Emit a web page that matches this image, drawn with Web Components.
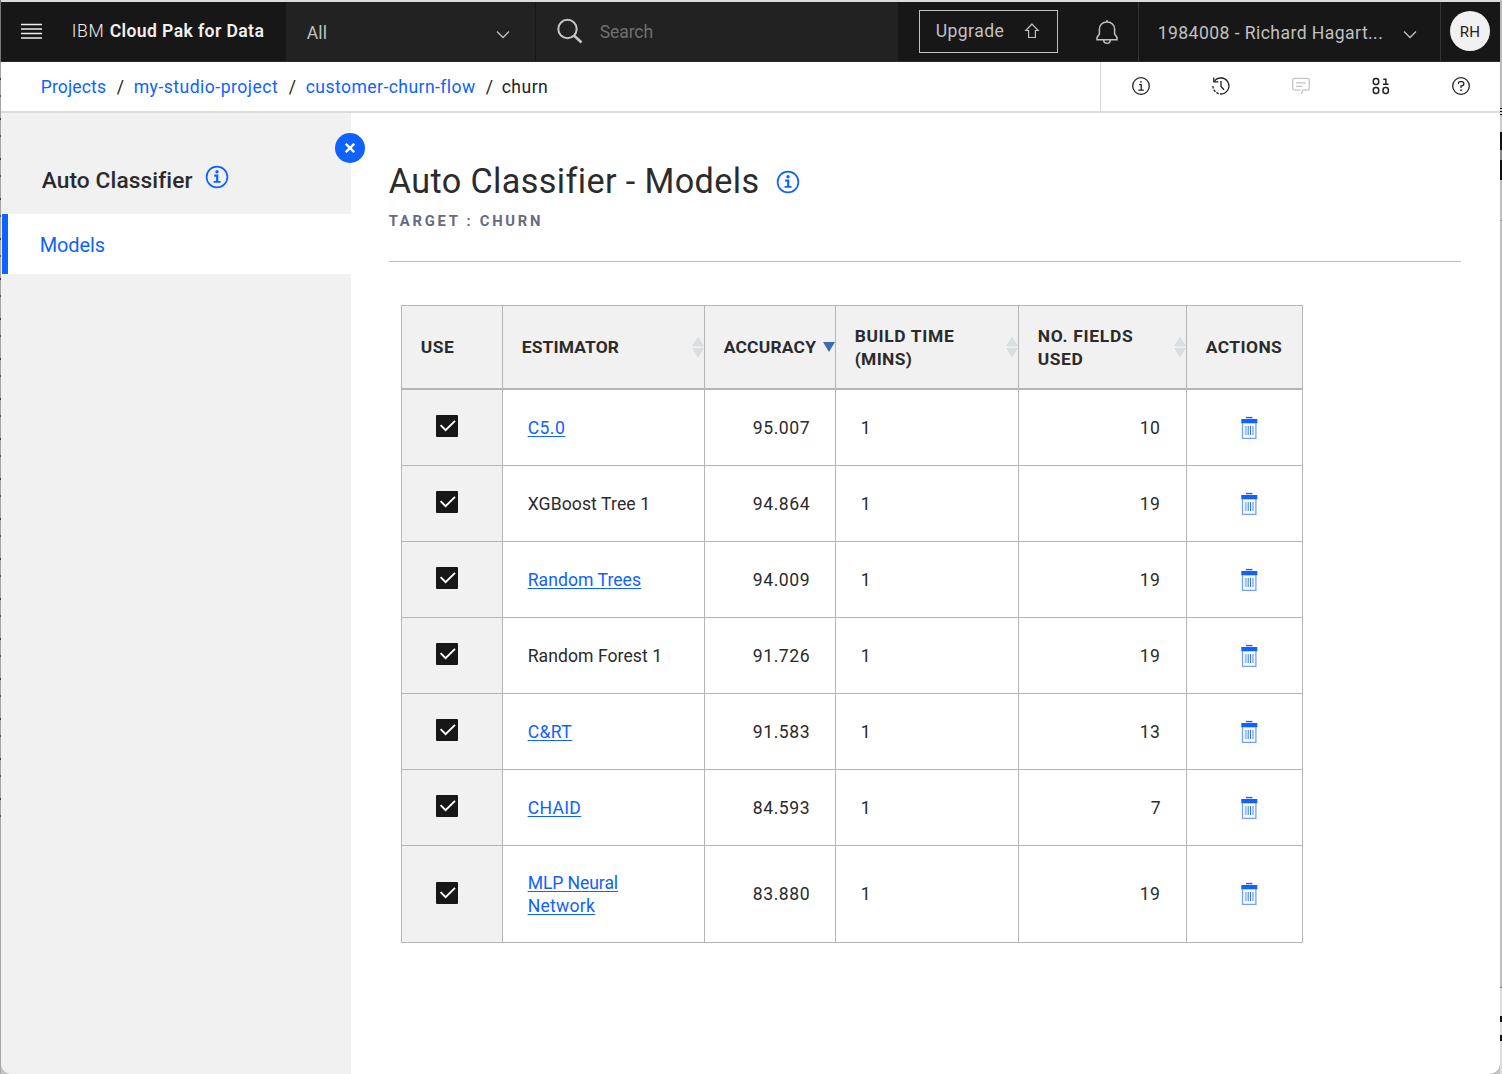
<!DOCTYPE html>
<html lang="en"><head><meta charset="utf-8"><title>churn - Auto Classifier</title>
<style>html,body{margin:0;height:100%;overflow:hidden;background:#c4c4c4}</style></head>
<body><app-window></app-window>
<script>
const base = '<style>*{box-sizing:border-box}svg{display:block;flex:none}:host{font-family:Roboto,sans-serif}</style>';
function component(name, html) {
  customElements.define(name, class extends HTMLElement {
    connectedCallback() {
      if (this.shadowRoot) return;
      this.attachShadow({mode: 'open'}).innerHTML = base + (typeof html === 'function' ? html(this) : html);
    }
  });
}
const t = (text, w, attrs = '') => `<fit-text w="${w}" ${attrs}>${text}</fit-text>`;

component('app-window', `<style>
:host{display:grid;grid-template-columns:1px 1499px 2px;height:1074px;width:1502px}
.left{background:linear-gradient(#777 0 62px,transparent 62px),repeating-linear-gradient(#aaa 0 15px,#555 15px 17px,#aaa 17px 38px,#333 38px 40px);background-size:1px 820px;background-repeat:no-repeat;background-color:#aaa}
.right{background:linear-gradient(#bbb 0 108px,#111 108px 109px,#ccc 109px 111px,#111 111px 112px,#ccc 112px 114px,#111 114px 115px,#ccc 115px 132px,#111 132px 150px,#888 150px 160px,#111 160px 180px,#c0c0c0 180px 220px,#999 220px 221px,#c0c0c0 221px 987px,#777 987px 988px,#ddd 988px 1016px,#111 1016px 1022px,#ddd 1022px 1035px,#111 1035px 1041px,#ddd 1041px)}
.app{background:#fff;border-top:2px solid #d9dcdc;border-radius:0 0 10px 10px;overflow:hidden;display:flex;flex-direction:column;box-shadow:0 0 1px #777}
.body{display:flex;flex:1;min-height:0}
</style><div class="left"></div><div class="app"><app-header></app-header><crumb-bar></crumb-bar><div class="body"><side-panel></side-panel><models-page></models-page></div></div><div class="right"></div>`);

component('app-header', `<style>
:host{display:flex;height:60px;background:#171717;color:#c1c1c1;border-bottom:1px solid #2c2828}
.brand{width:285px;display:flex;padding:17px 0 0 20px;color:#f0f0f0}
.brand svg{margin:3px 29px 0 0}.brand fit-text+fit-text{margin-left:4px}
.all{width:250px;background:#222;border-right:1px solid #171717;display:flex;justify-content:space-between;padding:19px 25px 0 20px}
.search{width:362px;background:#222;display:flex;padding:18px 0 0 20px;color:#6f6f6f}
.search svg{margin:-2px 15px 0 0}
.all svg,.acct svg{margin-top:9px}
.up{margin:8px 0 0 21px;width:139px;height:43px;border:1px solid #c1c1c1;display:flex;padding:8px 0 0 15px}
.up svg{margin:4px 0 0 19px}
.bell{width:80px;padding:17px 0 0 36px}
.acct{width:303px;border:solid #333;border-width:0 1px;display:flex;padding:19px 0 0 18px}
.acct svg{margin-left:19px}
.av{width:40px;height:40px;margin:9px 0 0 9px;border-radius:50%;background:#f1f1f1;color:#222;display:flex;justify-content:center;padding-top:9px}
</style>
<div class="brand"><svg width="21" height="18"><path d="M0 2.5h21M0 7h21M0 11.5h21M0 16h21" stroke="#eee" stroke-width="1.5"/></svg>${t('IBM',34,'size="17.6" weight="300"')}${t('Cloud Pak for Data',156,'size="17.6" weight="600"')}</div>
<div class="all">${t('All',22,'size="17.6"')}<svg width="14" height="10" viewBox="0 0 14 10" fill="none" stroke="#c1c1c1" stroke-width="1.3"><path d="M1 1.5l6 6 6-6"/></svg></div>
<div class="search"><svg width="28" height="28" viewBox="0 0 28 28" fill="none" stroke="#c6c6c6" stroke-width="2"><circle cx="11.5" cy="11" r="9.2"/><path d="M18 17.5l7.5 7" stroke-width="2.5"/></svg>${t('Search',55,'size="17.6"')}</div>
<div class="up">${t('Upgrade',70,'size="17.6"')}<svg width="16" height="16" viewBox="0 0 16 16" fill="none" stroke="#c1c1c1" stroke-width="1.2"><path d="M8 1L1.8 7.5h2.8v7h6.8v-7h2.8z"/></svg></div>
<div class="bell"><svg width="26" height="26" viewBox="0 0 26 26" fill="none" stroke="#c1c1c1" stroke-width="1.5"><path d="M13 1v2M13 3c-4.5 0-7.6 3-7.6 7.2V15L3 18.5v2.3h20v-2.3L20.6 15v-4.8C20.6 6 17.5 3 13 3z"/><path d="M9.7 21a3.3 3.3 0 0 0 6.6 0"/></svg></div>
<div class="acct">${t('1984008 - Richard Hagart...',227,'size="17.6"')}<svg width="14" height="10" viewBox="0 0 14 10" fill="none" stroke="#c1c1c1" stroke-width="1.3"><path d="M1 1.5l6 6 6-6"/></svg></div>
<div class="av">${t('RH',22,'size="15"')}</div>`);

component('crumb-bar', `<style>
:host{display:flex;height:51px;border-bottom:2px solid #d9dcdc;justify-content:space-between;background:#fff;color:#222}
nav{display:flex;padding:13px 0 0 39px;gap:9px}
a{color:#0f62fe}
.tools{width:400px;border-left:1px solid #d9dcdc;display:grid;grid-template-columns:repeat(5,80px);padding-top:14px;justify-items:center}
</style><nav><a>${t('Projects',67)}</a>${t('/',8)}<a>${t('my-studio-project',146)}</a>${t('/',8)}<a>${t('customer-churn-flow',171)}</a>${t('/',8)}<span style="margin-left:-1px">${t('churn',48)}</span></nav>
<div class="tools"><svg width="20" height="20" viewBox="0 0 20 20" fill="none" stroke="#222" stroke-width="1.3"><circle cx="10" cy="10" r="8.3"/><path d="M8.2 8.7h2v5M7.4 14.1h5.4"/><circle cx="10" cy="5.8" r=".9" fill="#222" stroke="none"/></svg>
<svg width="20" height="20" viewBox="0 0 20 20" fill="none" stroke="#222" stroke-width="1.3"><path d="M3.2 5.6A8 8 0 1 1 10 18"/><path d="M2.8 1.5v4.4h4.5M10 5v5.4l3 3.3"/><path d="M1.9 10A8.1 8.1 0 0 0 10 18" stroke-dasharray="2.6 1.2"/></svg>
<svg width="20" height="20" viewBox="0 0 20 20" fill="none" stroke="#c4c4c4" stroke-width="1.3"><path d="M10 18l2-3.8h4.5q1.8 0 1.8-1.8V4.2q0-1.8-1.8-1.8h-13q-1.8 0-1.8 1.8v8.2q0 1.8 1.8 1.8h6M5 6.8h10M5 10.3h6.5"/></svg>
<svg width="20" height="20" viewBox="0 0 20 20" fill="none" stroke="#222" stroke-width="1.5"><rect x="2.3" y="2.6" width="5.4" height="5.8" rx="2.4"/><rect x="2.3" y="11.6" width="5.4" height="5.8" rx="2.4"/><rect x="12" y="11.6" width="5.4" height="5.8" rx="2.4"/><path d="M12.3 3.3h2.6v4.9M12 8.3h5.6"/></svg>
<svg width="20" height="20" viewBox="0 0 20 20" fill="none" stroke="#222" stroke-width="1.3"><circle cx="10" cy="10" r="8.3"/><path d="M7.4 8.1V7.5A1.8 1.8 0 0 1 9.2 5.7h1.5a2.1 2.1 0 0 1 0 4.2H10v2"/><circle cx="10" cy="14.2" r=".9" fill="#222" stroke="none"/></svg></div>`);

component('info-icon', `<style>:host{display:block}</style><svg width="24" height="24" viewBox="0 0 24 24" fill="none" stroke="#0f62fe" stroke-width="1.7"><circle cx="12" cy="12" r="10.4"/><path d="M9.2 10.7h3v6" stroke-width="2.2"/><path d="M8.6 16.8h7" stroke-width="1.8"/><circle cx="12" cy="6.8" r="1.7" fill="#0f62fe" stroke="none"/></svg>`);

component('side-panel', `<style>
:host{display:block;position:relative;width:350px;background:#f1f1f1;color:#2b2b2b;z-index:1}
.title{height:101px;padding:52px 0 0 40px;display:flex}
.title fit-text{margin-top:1px}
.title info-icon{margin-left:12px}
.item{height:60px;margin-left:1px;background:#fff;border-left:6px solid #0f62fe;padding:19px 0 0 31px;color:#0f62fe}
.close{position:absolute;right:-14px;top:20px;width:30px;height:30px;border-radius:50%;background:#0f62fe;display:grid;place-items:center}
</style><div class="title">${t('Auto Classifier',152,'size="22.7" weight="500" lh="30"')}<info-icon></info-icon></div><div class="item">${t('Models',67,'size="20"')}</div>
<div class="close"><svg width="10" height="10" viewBox="0 0 10 10"><path d="M.8.8l8.4 8.4M9.2.8L.8 9.2" stroke="#fff" stroke-width="2.3"/></svg></div>`);

component('models-page', `<style>
:host{display:block;flex:1;padding:44px 39px 0 38px;color:#2b2b2b}
header{display:flex;height:53px}header info-icon{margin:13px 0 0 17px}
.sub{color:#666b80;height:51px;margin-left:-1px}
header fit-text{margin-left:-1px}
models-table{margin:43px 0 0 12px}
hr{margin:0;border:0;height:1px;background:#bcbcbc}
</style><header>${t('Auto Classifier - Models',371,'size="34.2" lh="48"')}<info-icon></info-icon></header><div class="sub">${t('TARGET : CHURN',155,'size="14.8" weight="700" lh="22"')}</div><hr><models-table></models-table>`);

component('sort-icon', el => el.hasAttribute('active')
  ? `<style>:host{display:block}</style><svg width="12" height="22"><path d="M0 6h12L6 16z" fill="#3b6cb0"/></svg>`
  : `<style>:host{display:block}</style><svg width="12" height="22"><path d="M0 10.3h12L6 .5zM0 12h12L6 21.8z" fill="#dadee0"/></svg>`);
component('check-box', `<style>:host{display:block}</style><svg width="22" height="22"><rect width="22" height="22" rx="1" fill="#171717"/><path d="M4.6 10.1l5 5 9.4-9.2" fill="none" stroke="#fff" stroke-width="1.9"/></svg>`);
component('trash-icon', `<style>:host{display:block}</style><svg width="18" height="24" viewBox="0 0 18 24"><path d="M6 1.6h6.4" stroke="#0f62fe" stroke-width="1.4"/><rect x="1.3" y="3" width="16" height="4.3" fill="#0f62fe"/><path d="M2.5 7v15.3h13.4V7" fill="none" stroke="#6fa0ff" stroke-width="1.3"/><path d="M5.8 10v9M12.9 10v9" stroke="#9fc0ff" stroke-width="2"/><path d="M8.2 10v9M10.5 10v9" stroke="#2c70fa" stroke-width="1"/></svg>`);

const rows = [['C5.0',39,'95.007','10',1],['XGBoost Tree 1',124,'94.864','19'],['Random Trees',115,'94.009','19',1],['Random Forest 1',136,'91.726','19'],['C&amp;RT',46,'91.583','13',1],['CHAID',55,'84.593','7',1],['MLP Neural|Network','92|69','83.880','19',1]];
const heads = [['USE',35],['ESTIMATOR',99,'s'],['ACCURACY',94,'a'],['BUILD TIME|(MINS)','101|59','s'],['NO. FIELDS|USED','97|47','s'],['ACTIONS',78]];
const lines = (text, w, attrs) => text.split('|').map((s, i) => t(s, String(w).split('|')[i], attrs)).join('');
component('models-table', `<style>
:host{display:grid;width:902px;grid-template-columns:101px 202px 131px 183px 168px 116px;grid-template-rows:84px repeat(6,76px) 97px;border:solid #b5b5b5;border-width:1px 0 0 1px}
.c{border:solid #b5b5b5;border-width:0 1px 1px 0;display:flex;align-items:center}
.h{border-bottom-width:2px;background:#f1f1f1;padding-left:18px;justify-content:space-between}
.h sort-icon{margin-top:-1px}
.two{padding-top:2px}
.use{background:#f1f1f1;padding:0 0 3px 34px}
.e{padding:2px 0 0 24px}.n{justify-content:flex-end;padding:2px 24px 0 0}.b{padding:2px 0 0 24px}
.f{padding-right:25px}
.last{padding-top:0}
.x{padding-left:53px}
.link{color:#0f62fe;--line:underline}
</style>${heads.map(([s, w, k]) => `<div class="c h"><div class="${s.includes('|') ? 'two' : ''}">${lines(s, w, 'size="17.4" weight="700" lh="23"')}</div>${k ? `<sort-icon ${k === 'a' ? 'active' : ''}></sort-icon>` : ''}</div>`).join('')}
${rows.map(([n, w, a, f, l], i) => { const z = i === 6 ? 'last' : ''; return `<div class="c use"><check-box></check-box></div><div class="c e"><div class="${l ? 'link' : ''}">${lines(n, w, 'lh="23"')}</div></div><div class="c n ${z}">${t(a,59,'lh="23"')}</div><div class="c b ${z}">${t('1',10,'lh="23"')}</div><div class="c n f ${z}">${t(f, f.length > 1 ? 22 : 11,'lh="23"')}</div><div class="c x"><trash-icon></trash-icon></div>`; }).join('')}`);

/* Text run that spreads its tracking evenly over a given width. */
customElements.define('fit-text', class extends HTMLElement {
  connectedCallback() {
    if (this.shadowRoot) return;
    const g = (n, d) => this.getAttribute(n) || d;
    const w = +g('w'), root = this.attachShadow({mode: 'open'});
    root.innerHTML = `<style>:host{display:block;box-sizing:border-box;flex:none;width:${w}px;padding-left:.7px;white-space:nowrap;font:${g('weight', 400)} ${g('size', 17.6)}px/${g('lh', 24)}px Roboto,"IBM Plex Sans",sans-serif}span{text-decoration:var(--line,none);text-decoration-thickness:1px;text-underline-offset:2px}</style><span><slot></slot></span>`;
    const span = root.querySelector('span'), n = this.textContent.length;
    if (n > 1) span.style.letterSpacing = ((w - 1.6 - span.getBoundingClientRect().width) / (n - .4)).toFixed(3) + 'px';
  }
});
</script></body></html>
